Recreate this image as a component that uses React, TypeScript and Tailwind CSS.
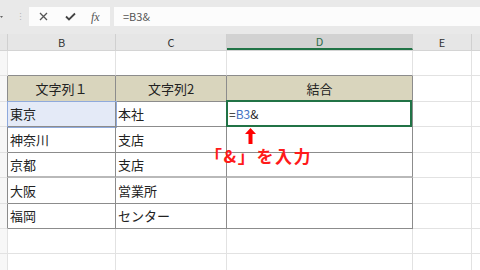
const font = { fontFamily: '"Noto Sans CJK JP", "Noto Sans", sans-serif' }

type Cell = { text?: string; align?: 'left' | 'center' }

const ROWS: { h: string; b: Cell; c: Cell; table: boolean; head?: boolean }[] = [
  { h: 'h-[25px]', b: {}, c: {}, table: false },
  { h: 'h-[26px]', b: { text: '文字列１', align: 'center' }, c: { text: '文字列2', align: 'center' }, table: true, head: true },
  { h: 'h-[25px]', b: { text: '東京' }, c: { text: '本社' }, table: true },
  { h: 'h-[26px]', b: { text: '神奈川' }, c: { text: '支店' }, table: true },
  { h: 'h-[25px]', b: { text: '京都' }, c: { text: '支店' }, table: true },
  { h: 'h-[26px]', b: { text: '大阪' }, c: { text: '営業所' }, table: true },
  { h: 'h-[25px]', b: { text: '福岡' }, c: { text: 'センター' }, table: true },
  { h: 'h-[25px]', b: {}, c: {}, table: false },
  { h: 'h-[25px]', b: {}, c: {}, table: false },
]

const App = () => {
  return (
    <div className="relative h-[270px] w-[480px] overflow-hidden bg-white text-[#222]" style={font}>
      {/* formula bar */}
      <div className="h-[34px] bg-[#e9e9e9] pt-[7px]">
        <div className="flex h-[19px] items-stretch">
          <div className="flex w-[29px] items-center">
            <svg width="4" height="4" viewBox="0 0 4 4">
              <path d="M0 1 L3 1 L1.5 3 Z" fill="#666" />
            </svg>
            <span className="ml-[12px] text-[9px] leading-none text-[#b5b5b5]">⋮</span>
          </div>
          <div className="flex w-[81px] items-center bg-[#fcfcfc] text-[#555]">
            <svg className="ml-[10px]" width="9" height="9" viewBox="0 0 9 9">
              <path d="M1 1 L8 8 M8 1 L1 8" stroke="#555" strokeWidth="1.3" />
            </svg>
            <svg className="ml-[17px]" width="11" height="9" viewBox="0 0 11 9">
              <path d="M1 4.5 L4 7.5 L10 1.5" stroke="#444" strokeWidth="1.8" fill="none" />
            </svg>
            <span className="ml-[15px] text-[12px] italic text-[#555]" style={{ fontFamily: '"Liberation Serif", serif' }}>
              fx
            </span>
          </div>
          <div className="ml-[4px] flex flex-1 items-center bg-[#fcfcfc] pl-[9px] text-[11px] text-[#555]">=B3&amp;</div>
        </div>
      </div>

      {/* column headers */}
      <div className="flex h-[17px] border-b border-[#d4d4d4] bg-[#e6e6e6] text-[11px] text-[#333]">
        <div className="w-[8px] border-r border-[#d0d0d0]" />
        <div className="flex w-[108px] items-center justify-center border-r border-[#d0d0d0]">B</div>
        <div className="flex w-[111px] items-center justify-center border-r border-[#d0d0d0]">C</div>
        <div className="flex w-[186px] items-center justify-center border-b-2 border-r border-b-[#217346] border-r-[#d0d0d0] bg-[#d2d2d2] text-[#2f6b4a]">
          D
        </div>
        <div className="flex w-[59px] items-center justify-center border-r border-[#d0d0d0]">E</div>
        <div className="flex-1" />
      </div>

      {/* rows */}
      {ROWS.map((row, i) => {
        const next = ROWS[i + 1]
        const dark = row.table || (next && next.table)
        const bottom = dark ? 'border-b-[#8c8c8c]' : 'border-b-[#e2e2e2]'
        const thick = i === 4 ? 'border-b-2 border-b-[#b9b9b9]' : 'border-b'
        const fill = row.head ? 'bg-[#d9d5bd]' : ''
        return (
          <div key={i} className={`flex ${row.h} text-[13px]`}>
            <div className={`w-[8px] border-b border-r border-b-[#e2e2e2] ${row.table ? 'border-r-[#8c8c8c]' : 'border-r-[#e2e2e2]'} bg-[#f7f7f7]`} />
            <div
              className={`flex w-[108px] items-center border-r ${thick} ${row.table ? 'border-r-[#8c8c8c]' : 'border-r-[#e2e2e2]'} ${bottom} ${fill} ${
                row.b.align === 'center' ? 'justify-center' : 'pl-[2px]'
              } ${i === 2 ? 'bg-[#e4eaf7] outline outline-1 outline-[#8faadc]' : ''}`}
            >
              {row.b.text}
            </div>
            <div
              className={`flex w-[111px] items-center border-r ${thick} ${row.table ? 'border-r-[#8c8c8c]' : 'border-r-[#e2e2e2]'} ${bottom} ${fill} ${
                row.c.align === 'center' ? 'justify-center' : 'pl-[2px]'
              }`}
            >
              {row.c.text}
            </div>
            <div
              className={`flex w-[186px] items-center border-r ${thick} ${row.table ? 'border-r-[#8c8c8c]' : 'border-r-[#e2e2e2]'} ${bottom} ${fill} ${
                row.head ? 'justify-center' : ''
              }`}
            >
              {row.head && '結合'}
              {i === 2 && (
                <div className="ml-[-1px] mt-[-1px] flex h-[27px] w-[188px] items-center border-2 border-[#217346] bg-white pl-[1px] text-[12px]">
                  =<span className="text-[#4472c4]">B3</span>&amp;
                </div>
              )}
            </div>
            <div className={`w-[59px] border-b border-r border-[#e2e2e2]`} />
            <div className={`flex-1 border-b border-[#e2e2e2]`} />
          </div>
        )
      })}

      {/* annotation */}
      <svg className="absolute left-[245px] top-[128px]" width="11" height="16" viewBox="0 0 11 16">
        <path d="M5.5 0 L11 6 L7.5 6 L7.5 16 L3.5 16 L3.5 6 L0 6 Z" fill="#ff0000" />
      </svg>
      <div className="absolute left-[205px] top-[145px] text-[17px] font-bold leading-[22px] tracking-[1.6px] text-[#ff1a1a]">
        「&amp;」を入力
      </div>
    </div>
  )
}

export default App
